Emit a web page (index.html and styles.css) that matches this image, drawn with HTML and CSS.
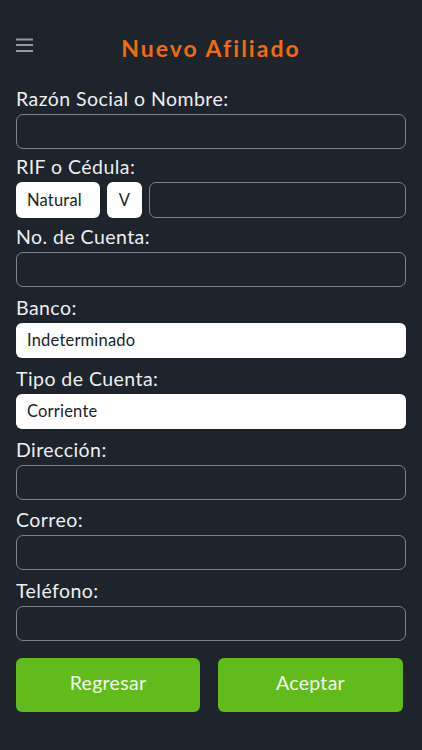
FILE: index.html
```html
<!DOCTYPE html>
<html lang="es">
<head>
<meta charset="utf-8">
<title>Nuevo Afiliado</title>
<link rel="stylesheet" href="styles.css">
</head>
<body>
<div class="screen">
  <header class="topbar">
    <div class="menu">
      <svg width="17" height="14" viewBox="0 0 17 14"><rect x="0" y="0.5" width="17" height="2" fill="#949aa0"/><rect x="0" y="6" width="17" height="2" fill="#949aa0"/><rect x="0" y="12" width="17" height="2" fill="#949aa0"/></svg>
    </div>
    <h1 class="title">Nuevo Afiliado</h1>
    <div></div>
  </header>

  <form class="form">
    <div class="field first">
      <label class="label">Razón Social o Nombre:</label>
      <div class="input"></div>
    </div>
    <div class="field second">
      <label class="label">RIF o Cédula:</label>
      <div class="rif-row">
        <div class="select natural">Natural</div>
        <div class="select letter">V</div>
        <div class="input grow"></div>
      </div>
    </div>
    <div class="field">
      <label class="label">No. de Cuenta:</label>
      <div class="input"></div>
    </div>
    <div class="field">
      <label class="label">Banco:</label>
      <div class="select wide">Indeterminado</div>
    </div>
    <div class="field">
      <label class="label">Tipo de Cuenta:</label>
      <div class="select wide">Corriente</div>
    </div>
    <div class="field">
      <label class="label">Dirección:</label>
      <div class="input"></div>
    </div>
    <div class="field">
      <label class="label">Correo:</label>
      <div class="input"></div>
    </div>
    <div class="field">
      <label class="label">Teléfono:</label>
      <div class="input"></div>
    </div>
    <div class="actions">
      <button type="button" class="btn">Regresar</button>
      <button type="button" class="btn">Aceptar</button>
    </div>
  </form>
</div>
</body>
</html>
```

FILE: styles.css
```css
html, body {
  margin: 0;
  padding: 0;
  background: #1e242b;
}
body {
  font-family: Lato, "Open Sans", "DejaVu Sans", sans-serif;
  color: #eceef0;
}
.screen {
  width: 422px;
  height: 750px;
  box-sizing: border-box;
  padding: 30px 16px 0 16px;
}
.topbar {
  display: grid;
  grid-template-columns: 1fr auto 1fr;
  height: 36px;
}
.menu {
  align-self: start;
  margin-top: 8px;
  height: 14px;
}
.menu svg { display: block; }
.title {
  margin: 0;
  font-size: 23px;
  line-height: 36px;
  font-weight: 700;
  color: #ef6b15;
  letter-spacing: 2px;
  text-align: center;
}
.form {
  margin-top: 22px;
  display: flex;
  flex-direction: column;
  gap: 9.5px;
}
.field {
  display: flex;
  flex-direction: column;
  gap: 4px;
}
.field.first { margin-bottom: -2.5px; }
.field.second { margin-bottom: -1.5px; }
.label {
  font-size: 19.5px;
  line-height: 22px;
  color: #eceef0;
  letter-spacing: 0.45px;
}
.input {
  height: 35px;
  box-sizing: border-box;
  border: 1.5px solid #7e848b;
  border-radius: 7px;
}
.rif-row {
  display: flex;
  gap: 7px;
  height: 36px;
}
.rif-row .input { height: 36px; }
.grow { flex: 1; }
.select {
  background: #ffffff;
  border-radius: 6px;
  color: #222326;
  font-size: 16.5px;
  letter-spacing: 0.2px;
  box-sizing: border-box;
  display: flex;
  align-items: center;
}
.natural {
  width: 84px;
  padding-left: 11px;
}
.letter {
  width: 35px;
  justify-content: center;
}
.wide {
  height: 35.5px;
  padding-left: 11px;
}
.actions {
  margin-top: 7.5px;
  display: grid;
  grid-template-columns: 184px 185px;
  gap: 18px;
}
.btn {
  height: 54px;
  border: none;
  border-radius: 6px;
  background: #62bb1c;
  color: #f4f8ee;
  font-family: Lato, "Open Sans", "DejaVu Sans", sans-serif;
  font-size: 19.5px;
  letter-spacing: 0.3px;
  padding: 0 0 4px 0;
}
```
